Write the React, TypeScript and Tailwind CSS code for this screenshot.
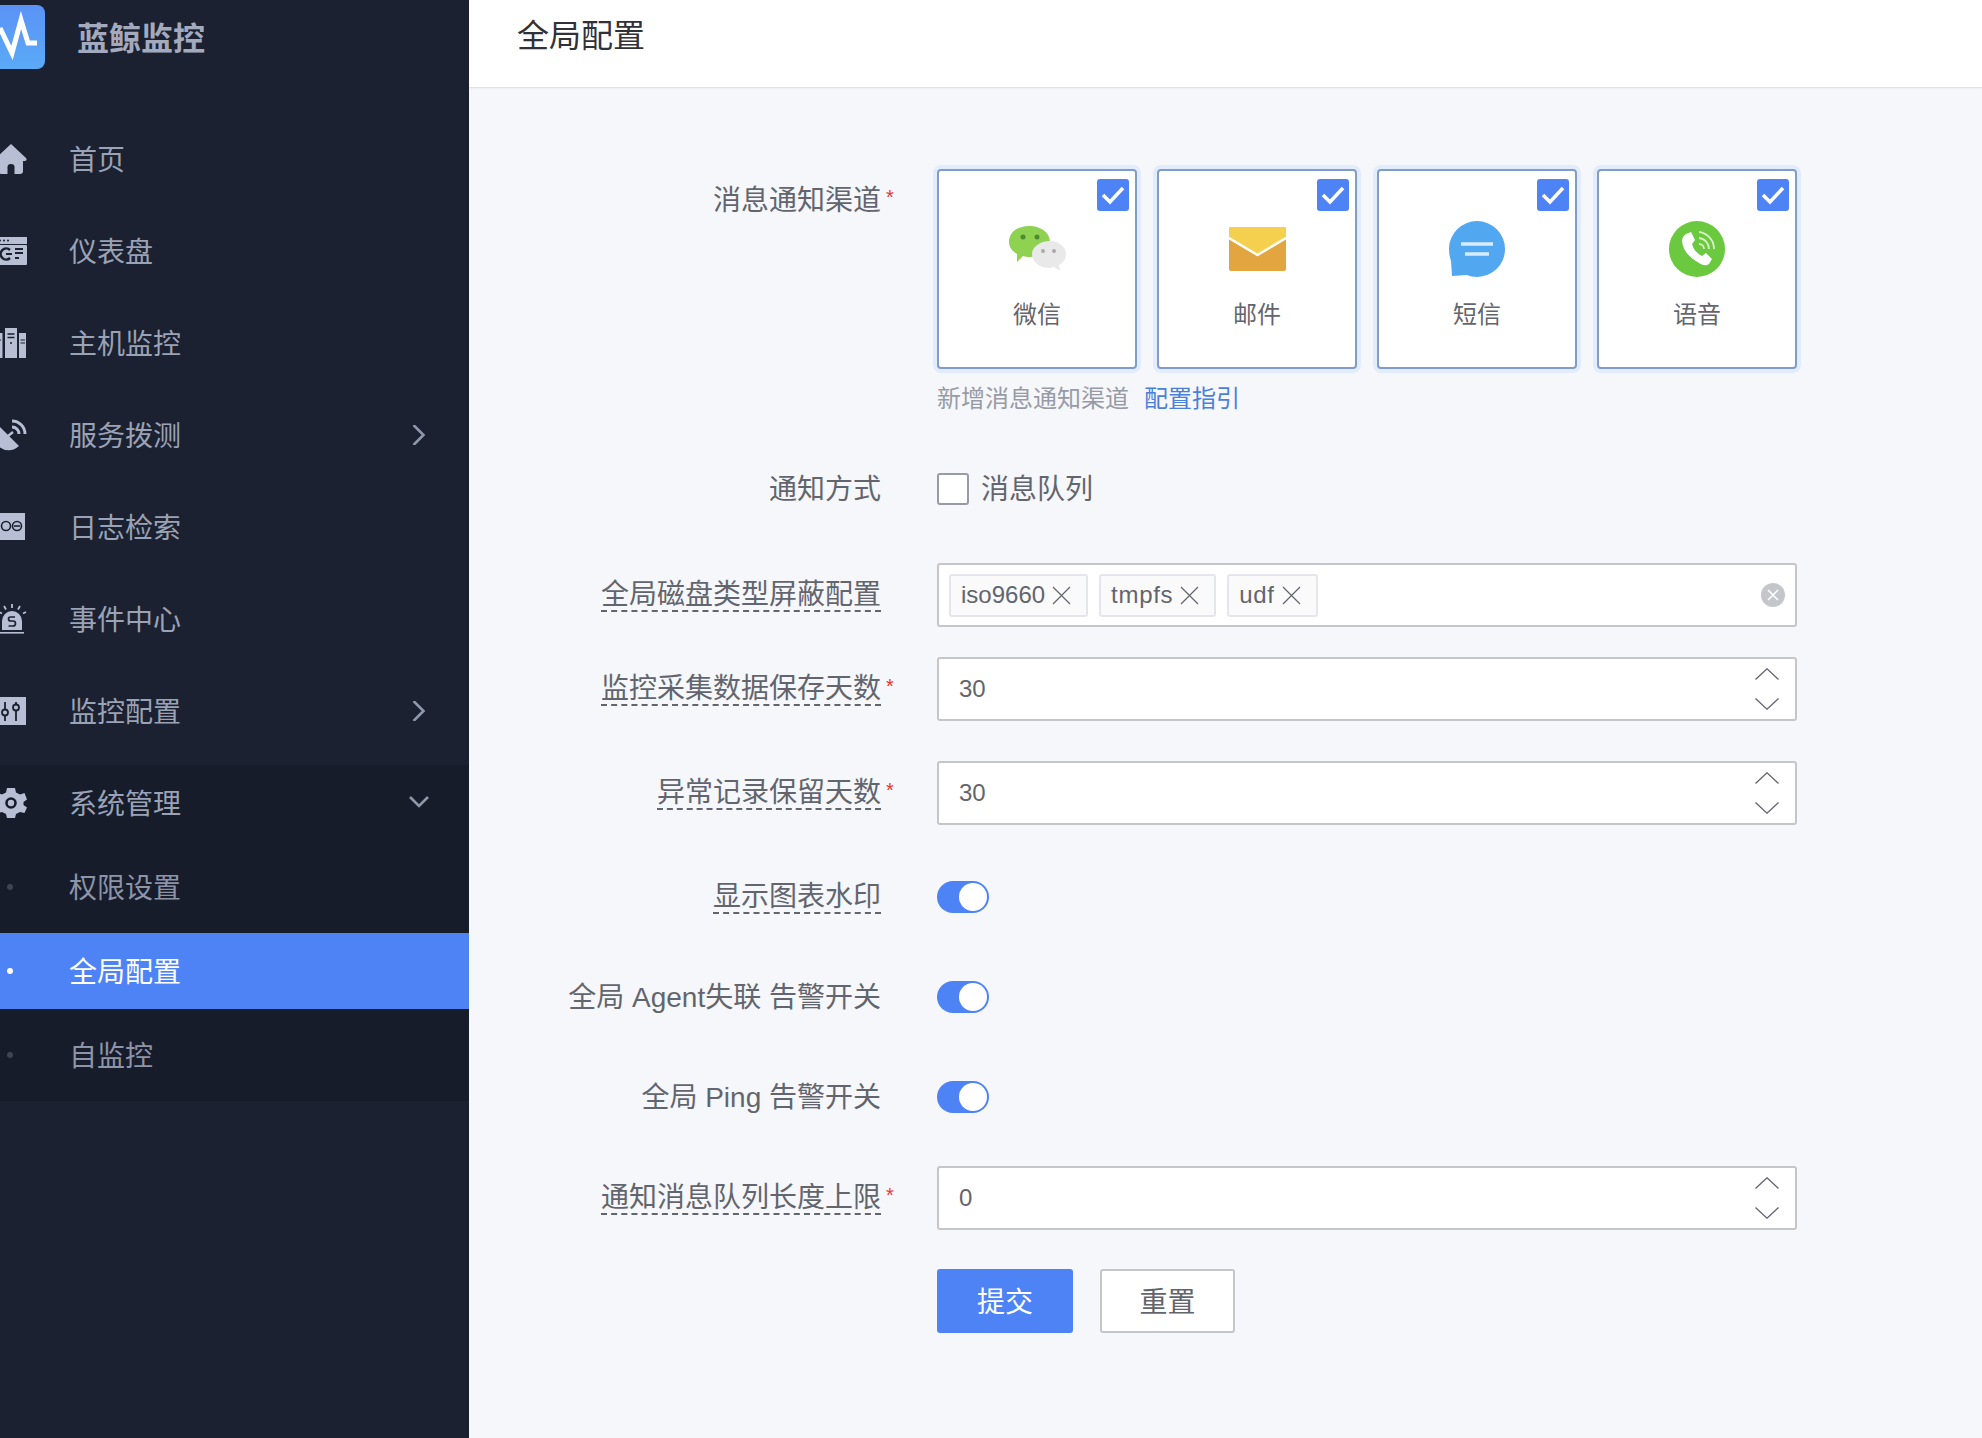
import type { ReactNode } from "react";

const DARK = "#1b2130";

function HomeIcon() {
  return (
    <svg viewBox="0 0 32 32" className="h-8 w-8 fill-current">
      <path
        fillRule="evenodd"
        d="M16 1 L31 15 Q32.500 17.500 30 18 H28 V28 Q28 31 25 31 H7 Q4 31 4 28 V18 H2 Q-.5 17.500 1 15 Z M12.500 31 H19.500 V24 Q19.500 21 16 21 Q12.500 21 12.500 24 Z"
      />
    </svg>
  );
}

function DashboardIcon() {
  return (
    <svg viewBox="0 0 32 32" className="h-8 w-8 fill-current">
      <rect x="0" y="2" width="32" height="7" />
      <rect x="0" y="10" width="32" height="20" rx="1" />
      <circle cx="5" cy="5.500" r="1" fill={DARK} />
      <circle cx="9" cy="5.500" r="1" fill={DARK} />
      <circle cx="13" cy="5.500" r="1" fill={DARK} />
      <path d="M15 15 A5.500 5.500 0 1 0 15 23" fill="none" stroke={DARK} strokeWidth="2.500" />
      <path d="M11 19 H17" stroke={DARK} strokeWidth="2" />
      <path d="M20 14 H28 M20 18 H28 M20 23 H24" stroke={DARK} strokeWidth="2" />
    </svg>
  );
}

function HostIcon() {
  return (
    <svg viewBox="0 0 32 32" className="h-8 w-8 fill-current">
      <path d="M0 6 H7.500 V31 H0 Z" />
      <path d="M10 1 H22 V31 H10 Z" />
      <path d="M24 6 H31 V31 H24 Z" />
      <path d="M12.500 7 H19.500 M12.500 10.500 H19.500" stroke={DARK} strokeWidth="1.500" />
      <path d="M15 16 H17" stroke={DARK} strokeWidth="1.500" />
      <path d="M1 13 H6 M25.500 13 H30 M25.500 16 H30" stroke={DARK} strokeWidth="1.200" />
    </svg>
  );
}

function DialIcon() {
  return (
    <svg viewBox="0 0 32 32" className="h-8 w-8 fill-current">
      <path d="M3 6 L24 27 A14.850 14.850 0 0 1 3 6 Z" />
      <path d="M17 2 A13 13 0 0 1 30 15" fill="none" stroke="currentColor" strokeWidth="3" />
      <path d="M17 8 A7 7 0 0 1 24 15" fill="none" stroke="currentColor" strokeWidth="3" />
      <path d="M13 17 L18 13" stroke="currentColor" strokeWidth="2.500" />
    </svg>
  );
}

function LogIcon() {
  return (
    <svg viewBox="0 0 32 32" className="h-8 w-8 fill-current">
      <rect x="0" y="2" width="30" height="27" />
      <circle cx="11" cy="15" r="4.500" fill="none" stroke={DARK} strokeWidth="1.600" />
      <circle cx="22" cy="15" r="4.500" fill="none" stroke={DARK} strokeWidth="1.600" />
      <path d="M19 15 H25" stroke={DARK} strokeWidth="1.600" />
    </svg>
  );
}

function EventIcon() {
  return (
    <svg viewBox="0 0 32 32" className="h-8 w-8 fill-current">
      <path d="M7 27 V18 A10 10 0 0 1 27 18 V27 Z" />
      <rect x="0" y="29" width="29" height="1.600" />
      <path d="M17 1 V5 M9 3 L11 6.500 M25 3 L23 6.500 M4 9 L7 10.500 M31 9 L28 10.500" stroke="currentColor" strokeWidth="1.800" />
      <path d="M20 14 H15.500 Q13.500 14 13.500 16 Q13.500 18 16 18 H18 Q20.500 18 20.500 20.500 Q20.500 23 18 23 H13.500" fill="none" stroke={DARK} strokeWidth="1.700" />
    </svg>
  );
}

function ConfigIcon() {
  return (
    <svg viewBox="0 0 32 32" className="h-8 w-8 fill-current">
      <rect x="0" y="2" width="31" height="28" />
      <path d="M10 7 V14 M10 21 V26 M21 7 V9 M21 16 V26" stroke={DARK} strokeWidth="1.800" />
      <circle cx="10" cy="17.500" r="3" fill="none" stroke={DARK} strokeWidth="1.800" />
      <circle cx="21" cy="12.500" r="3" fill="none" stroke={DARK} strokeWidth="1.800" />
    </svg>
  );
}

function GearIcon() {
  return (
    <svg viewBox="0 0 32 32" className="h-8 w-8 fill-current">
      <path d="M12 1 H20 L21 5.500 L25 7.500 L29.500 6 L32 12.500 L28.500 15 V18 L32 20.500 L29.500 26 L25 25 L21 27 L20 31 H12 L11 27 L7 25 L2.500 26 L0 20.500 L3.500 18 V15 L0 12.500 L2.500 6 L7 7.500 L11 5.500 Z" />
      <circle cx="16" cy="16" r="4.500" fill="none" stroke="#171c2b" strokeWidth="2.600" />
    </svg>
  );
}

function ChevronRight() {
  return (
    <svg viewBox="0 0 20 20" className="h-5 w-5" fill="none" stroke="#8f97ab" strokeWidth="2.600">
      <path d="M4.500 0 L14.500 10 L4.500 20" />
    </svg>
  );
}

function ChevronDown() {
  return (
    <svg viewBox="0 0 20 20" className="h-5 w-5" fill="none" stroke="#8f97ab" strokeWidth="2.600">
      <path d="M1 4 L10 13 L19 4" />
    </svg>
  );
}

const menu: Array<{ label: string; icon: ReactNode; arrow?: boolean }> = [
  { label: "首页", icon: <HomeIcon /> },
  { label: "仪表盘", icon: <DashboardIcon /> },
  { label: "主机监控", icon: <HostIcon /> },
  { label: "服务拨测", icon: <DialIcon />, arrow: true },
  { label: "日志检索", icon: <LogIcon /> },
  { label: "事件中心", icon: <EventIcon /> },
  { label: "监控配置", icon: <ConfigIcon />, arrow: true },
];

function MenuRow({ label, icon, right }: { label: string; icon: ReactNode; right?: ReactNode }) {
  return (
    <div className="flex h-[76px] items-center pr-[40px] text-[#9aa2b6]">
      <span className="-ml-[5px] text-[#b8bfd4]">{icon}</span>
      <span className="ml-[42px] pt-[3px] text-[28px]">{label}</span>
      <span className="ml-auto">{right}</span>
    </div>
  );
}

function SubRow({ label, active }: { label: string; active?: boolean }) {
  return (
    <div
      className={
        active
          ? "flex h-[76px] items-center bg-[#4e83f5] pl-[7px] text-white"
          : "flex h-[76px] items-center pl-[7px] text-[#8d94a7]"
      }
    >
      <span className={active ? "h-[6px] w-[6px] rounded-full bg-white" : "h-[6px] w-[6px] rounded-full bg-[#3d4454]"} />
      <span className="ml-[56px] pt-[3px] text-[28px]">{label}</span>
    </div>
  );
}

function Sidebar() {
  return (
    <aside className="w-[469px] shrink-0 overflow-hidden bg-[#1b2130]">
      <div className="mt-[5px] flex h-16 items-center">
        <div className="-ml-[19px] h-16 w-16 shrink-0 rounded-lg bg-gradient-to-b from-[#5a93f6] to-[#5aaaf7]">
          <svg viewBox="0 0 64 64" className="h-16 w-16" fill="none" stroke="white" strokeWidth="5">
            <path d="M19 23 L31 48 L40 15 L47 38 H56" />
          </svg>
        </div>
        <span className="ml-[32px] pt-[3px] text-[32px] font-bold text-[#a3aabd]">蓝鲸监控</span>
      </div>
      <nav className="mt-[52px] flex flex-col gap-4">
        {menu.map((item) => (
          <MenuRow
            key={item.label}
            label={item.label}
            icon={item.icon}
            right={item.arrow ? <ChevronRight /> : null}
          />
        ))}
      </nav>
      <div className="mt-4 flex flex-col gap-2 bg-[#171c2b] pb-2">
        <MenuRow label="系统管理" icon={<GearIcon />} right={<ChevronDown />} />
        <SubRow label="权限设置" />
        <SubRow label="全局配置" active />
        <SubRow label="自监控" />
      </div>
    </aside>
  );
}

function FormRow({
  label,
  dashed,
  required,
  top,
  className,
  children,
}: {
  label?: string;
  dashed?: boolean;
  required?: boolean;
  top?: boolean;
  className: string;
  children: ReactNode;
}) {
  return (
    <div className={`flex ${top ? "items-start" : "items-center"} ${className}`}>
      <div className={`flex w-[412px] shrink-0 justify-end ${top ? "pt-[15px]" : ""}`}>
        {label ? (
          <span
            className={
              dashed
                ? "border-b-2 border-dashed border-[#63656e] pt-[2px] text-[28px] leading-[30px] text-[#63656e]"
                : "pt-[2px] text-[28px] leading-[30px] text-[#63656e]"
            }
          >
            {label}
          </span>
        ) : null}
      </div>
      <div className={`w-[56px] shrink-0 pl-[5px] ${top ? "pt-[12px]" : "-mt-[6px]"} text-[20px] leading-[32px] text-[#ea3636]`}>
        {required ? "*" : ""}
      </div>
      <div className="w-[860px] shrink-0">{children}</div>
    </div>
  );
}

function WechatIcon() {
  return (
    <svg viewBox="0 0 57 46" className="h-[46px] w-[57px]">
      <path d="M20 0 C31 0 41 6 41 16 C41 26 31 31 20 31 Q17 31 14 30 L8 36 L8 28 C3 25 0 21 0 16 C0 6 9 0 20 0 Z" fill="#8fd150" />
      <circle cx="14" cy="11" r="2.500" fill="#4f8a33" />
      <circle cx="28" cy="11" r="2.500" fill="#4f8a33" />
      <path d="M41 15 C50 15 57 21 57 28 C57 33 54 37 50 39 L51 45 L45 41 Q42 42 40 42 C31 42 23 36 23 28 C23 21 31 15 41 15 Z" fill="#e9e9e9" />
      <circle cx="34" cy="25" r="2" fill="#a9a9a9" />
      <circle cx="45" cy="25" r="2" fill="#a9a9a9" />
    </svg>
  );
}

function MailIcon() {
  return (
    <svg viewBox="0 0 57 44" className="h-[44px] w-[57px]">
      <rect width="57" height="44" rx="2" fill="#e3a53f" />
      <path d="M2 0 H55 Q57 0 57 2 V11 L28.500 28 L0 11 V2 Q0 0 2 0 Z" fill="#f5d04f" />
      <path d="M0 11 L28.500 28 L57 11" fill="none" stroke="white" strokeWidth="2.500" />
    </svg>
  );
}

function SmsIcon() {
  return (
    <svg viewBox="0 0 56 56" className="h-14 w-14">
      <path d="M28 0 A28 28 0 1 1 28 56 Q22 56 18 54 L3 55 L2 40 Q0 34 0 28 A28 28 0 0 1 28 0 Z" fill="#52a8f0" />
      <path d="M12 23 H44" stroke="#d7ecfc" strokeWidth="3.500" />
      <path d="M16 33 H40" stroke="#d7ecfc" strokeWidth="3.500" />
    </svg>
  );
}

function VoiceIcon() {
  return (
    <svg viewBox="0 0 56 56" className="h-14 w-14">
      <circle cx="28" cy="28" r="28" fill="#6bc93f" />
      <path
        d="M17 13 L22 11 L26 19 L23 23 Q25 31 33 35 L37 32 L43 38 L40 43 Q36 46 30 42 Q14 33 13 20 Q13 16 17 13 Z"
        fill="white"
      />
      <path d="M30 11 A17 17 0 0 1 45 28" fill="none" stroke="#d6f0c6" strokeWidth="1.800" />
      <path d="M30 17 A11 11 0 0 1 40 28" fill="none" stroke="#d6f0c6" strokeWidth="1.800" />
      <path d="M30 23 A5 5 0 0 1 35 28" fill="none" stroke="#d6f0c6" strokeWidth="1.800" />
    </svg>
  );
}

const channels: Array<{ label: string; icon: ReactNode }> = [
  { label: "微信", icon: <WechatIcon /> },
  { label: "邮件", icon: <MailIcon /> },
  { label: "短信", icon: <SmsIcon /> },
  { label: "语音", icon: <VoiceIcon /> },
];

function ChannelCard({ label, icon }: { label: string; icon: ReactNode }) {
  return (
    <div className="flex h-[200px] w-[200px] flex-col rounded border-2 border-[#7f9ccb] bg-white shadow-[0_0_0_4px_#e2ecfd]">
      <div className="flex justify-end pr-[6px] pt-2">
        <span className="flex h-8 w-8 items-center justify-center rounded-[3px] bg-[#4e83f5]">
          <svg viewBox="0 0 32 32" className="h-8 w-8" fill="none" stroke="white" strokeWidth="3.500">
            <path d="M6 16 L13 23 L26 9" />
          </svg>
        </span>
      </div>
      <div className="mt-[9px] flex h-[58px] items-center justify-center">{icon}</div>
      <div className="mt-[21px] text-center text-2xl leading-8 text-[#63656e]">{label}</div>
    </div>
  );
}

function Tag({ label, className }: { label: string; className?: string }) {
  return (
    <span
      className={`flex h-[43px] items-center gap-[7px] rounded-[3px] border-2 border-[#e5e6eb] bg-[#fafafa] pl-[10px] pr-[15px] text-2xl text-[#63656e] ${className ?? ""}`}
    >
      {label}
      <svg viewBox="0 0 19 19" className="h-[19px] w-[19px]" fill="none" stroke="#63656e" strokeWidth="1.200">
        <path d="M1 1 L18 18 M18 1 L1 18" />
      </svg>
    </span>
  );
}

function NumberInput({ value }: { value: string }) {
  return (
    <div className="flex h-16 items-center justify-between rounded-[3px] border-2 border-[#c4c6cc] bg-white pl-5 pr-4 text-2xl text-[#63656e]">
      <span>{value}</span>
      <span className="flex flex-col gap-[18px]">
        <svg viewBox="0 0 24 12" className="h-3 w-6" fill="none" stroke="#63656e" strokeWidth="1.300">
          <path d="M0.500 11.500 L12 0.800 L23.500 11.500" />
        </svg>
        <svg viewBox="0 0 24 12" className="h-3 w-6" fill="none" stroke="#63656e" strokeWidth="1.300">
          <path d="M0.500 0.500 L12 11.200 L23.500 0.500" />
        </svg>
      </span>
    </div>
  );
}

function Toggle() {
  return (
    <div className="flex h-8 w-[52px] justify-end rounded-full bg-[#4e83f5] p-[2px]">
      <span className="h-7 w-7 rounded-full bg-white" />
    </div>
  );
}

export default function App() {
  return (
    <div className="flex h-[1438px] overflow-hidden bg-[#f5f7fb] font-['Liberation_Sans','Noto_Sans_CJK_SC',sans-serif]">
      <Sidebar />
      <main className="min-w-0 flex-1">
        <header className="flex h-[88px] items-center border-b border-[#dfe2e8] bg-white pl-[48px] pb-[16px] text-[32px] text-[#313238] shadow-[0_1px_2px_rgba(0,0,0,0.04)]">
          全局配置
        </header>

        <form className="pt-[81px]">
          <FormRow label="消息通知渠道" required top className="">
            <div className="flex gap-5">
              {channels.map((c) => (
                <ChannelCard key={c.label} label={c.label} icon={c.icon} />
              ))}
            </div>
            <div className="mt-[13px] flex gap-[15px] text-2xl leading-[34px]">
              <span className="text-[#979ba5]">新增消息通知渠道</span>
              <span className="text-[#4a7fdc]">配置指引</span>
            </div>
          </FormRow>

          <FormRow label="通知方式" className="mt-[57px]">
            <div className="flex items-center gap-3">
              <span className="h-8 w-8 rounded-[3px] border-2 border-[#979ba5] bg-white" />
              <span className="pt-[2px] text-[28px] leading-[30px] text-[#63656e]">消息队列</span>
            </div>
          </FormRow>

          <FormRow label="全局磁盘类型屏蔽配置" dashed className="mt-[58px]">
            <div className="flex h-16 items-center gap-[11px] rounded-[3px] border-2 border-[#c4c6cc] bg-white pl-[10px] pr-[10px]">
              <Tag label="iso9660" />
              <Tag label="tmpfs" className="tracking-[0.7px]" />
              <Tag label="udf" className="tracking-[0.7px]" />
              <svg viewBox="0 0 24 24" className="ml-auto h-6 w-6">
                <circle cx="12" cy="12" r="12" fill="#c4c6cc" />
                <path d="M7 7 L17 17 M17 7 L7 17" stroke="white" strokeWidth="1.500" />
              </svg>
            </div>
          </FormRow>

          <FormRow label="监控采集数据保存天数" dashed required className="mt-[30px]">
            <NumberInput value="30" />
          </FormRow>

          <FormRow label="异常记录保留天数" dashed required className="mt-[40px]">
            <NumberInput value="30" />
          </FormRow>

          <FormRow label="显示图表水印" dashed className="mt-[55px]">
            <Toggle />
          </FormRow>

          <FormRow label="全局 Agent失联 告警开关" className="mt-[67px]">
            <Toggle />
          </FormRow>

          <FormRow label="全局 Ping 告警开关" className="mt-[68px]">
            <Toggle />
          </FormRow>

          <FormRow label="通知消息队列长度上限" dashed required className="mt-[53px]">
            <NumberInput value="0" />
          </FormRow>

          <FormRow className="mt-[39px]">
            <div className="flex gap-[27px]">
              <button type="button" className="h-[64px] w-[136px] rounded-[3px] bg-[#4e83f5] pt-[3px] text-[28px] text-white">
                提交
              </button>
              <button
                type="button"
                className="h-[64px] w-[135px] rounded-[3px] border-2 border-[#c4c6cc] bg-white pt-[3px] text-[28px] text-[#63656e]"
              >
                重置
              </button>
            </div>
          </FormRow>
        </form>
      </main>
    </div>
  );
}
